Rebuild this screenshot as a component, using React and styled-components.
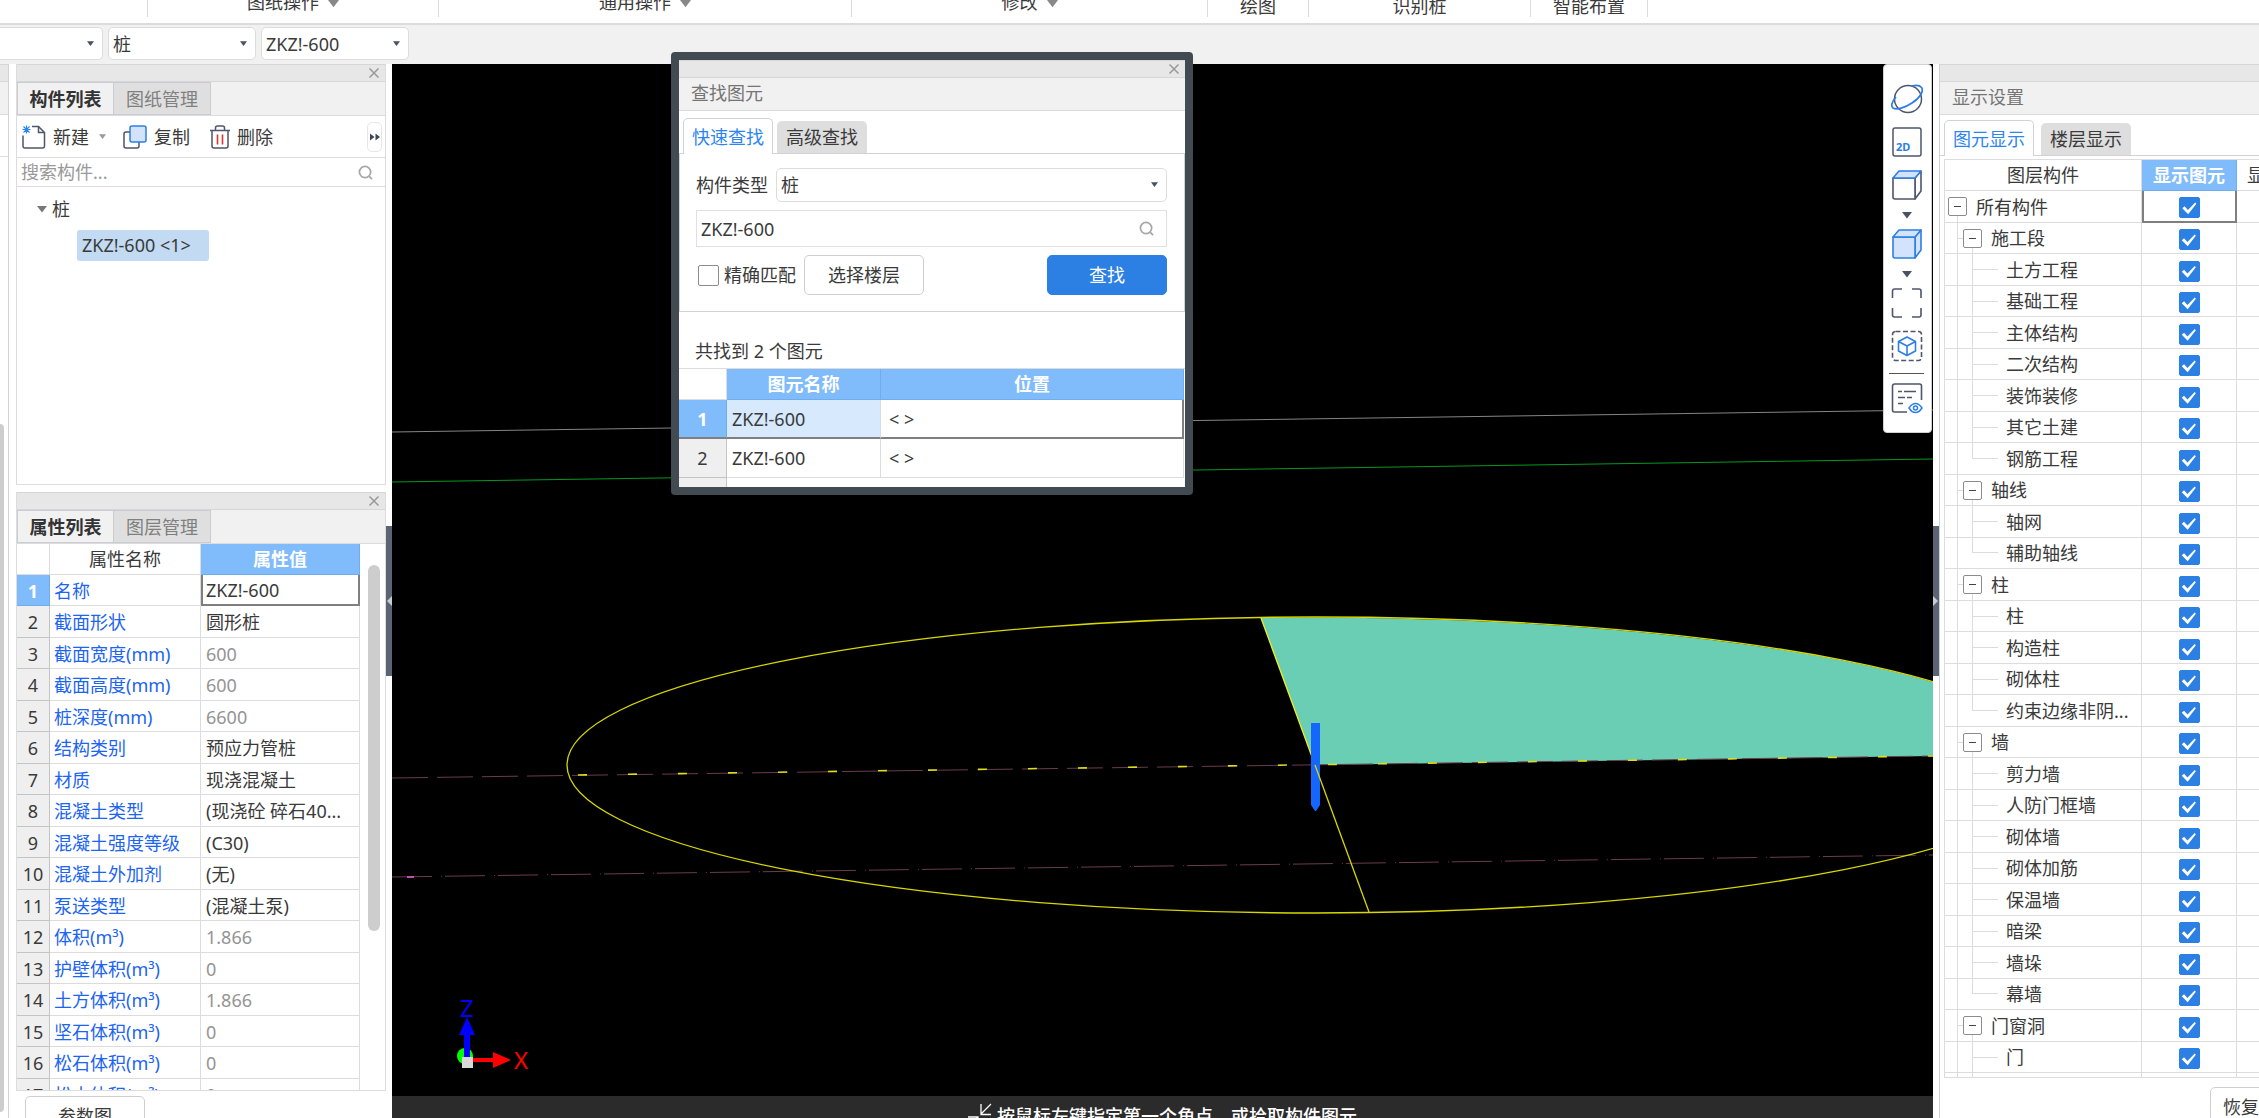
import React, { useState } from 'react';
import styled, { createGlobalStyle, css } from 'styled-components';

const ribbonGroups = [
  { label: '', width: 148 },
  { label: '图纸操作', width: 291, menu: true },
  { label: '通用操作', width: 413, menu: true },
  { label: '修改', width: 356, menu: true },
  { label: '绘图', width: 101 },
  { label: '识别桩', width: 222 },
  { label: '智能布置', width: 117 },
];

const properties = [
  { name: '名称', value: 'ZKZ!-600' },
  { name: '截面形状', value: '圆形桩' },
  { name: '截面宽度(mm)', value: '600', readOnly: true },
  { name: '截面高度(mm)', value: '600', readOnly: true },
  { name: '桩深度(mm)', value: '6600', readOnly: true },
  { name: '结构类别', value: '预应力管桩' },
  { name: '材质', value: '现浇混凝土' },
  { name: '混凝土类型', value: '(现浇砼 碎石40...' },
  { name: '混凝土强度等级', value: '(C30)' },
  { name: '混凝土外加剂', value: '(无)' },
  { name: '泵送类型', value: '(混凝土泵)' },
  { name: '体积(m³)', value: '1.866', readOnly: true },
  { name: '护壁体积(m³)', value: '0', readOnly: true },
  { name: '土方体积(m³)', value: '1.866', readOnly: true },
  { name: '坚石体积(m³)', value: '0', readOnly: true },
  { name: '松石体积(m³)', value: '0', readOnly: true },
  { name: '松土体积(m³)', value: '0', readOnly: true },
];

const layers = [
  { name: '施工段', items: ['土方工程', '基础工程', '主体结构', '二次结构', '装饰装修', '其它土建', '钢筋工程'] },
  { name: '轴线', items: ['轴网', '辅助轴线'] },
  { name: '柱', items: ['柱', '构造柱', '砌体柱', '约束边缘非阴...'] },
  { name: '墙', items: ['剪力墙', '人防门框墙', '砌体墙', '砌体加筋', '保温墙', '暗梁', '墙垛', '幕墙'] },
  { name: '门窗洞', items: ['门'], open: true },
];

const layerRows = [{ name: '所有构件', level: 0 }];
layers.forEach((group) => {
  layerRows.push({ name: group.name, level: 1 });
  group.items.forEach((item, i) => {
    layerRows.push({ name: item, level: 2, last: !group.open && i === group.items.length - 1 });
  });
});

const Triangle = ({ size = 7, color = '#4a5160' }) => (
  <svg width={size} height={size} viewBox="0 0 8 8" aria-hidden="true">
    <path d="M0 1.5h8L4 6.8z" fill={color} />
  </svg>
);

const CloseIcon = () => (
  <svg width="10" height="10" viewBox="0 0 10 10" aria-hidden="true">
    <path d="M.5.5l9 9M9.500.5l-9 9" stroke="#999" strokeWidth="1.5" fill="none" />
  </svg>
);

const SearchIcon = () => (
  <svg width="15" height="15" viewBox="0 0 16 16" aria-hidden="true">
    <circle cx="7.500" cy="7.500" r="6" stroke="#a6a6a6" strokeWidth="1.800" fill="none" />
    <path d="M11.500 11.500l3.500 3.500" stroke="#a6a6a6" strokeWidth="1.800" />
  </svg>
);

const NewIcon = () => (
  <svg width="24" height="24" viewBox="0 0 24 24" fill="none" aria-hidden="true">
    <path d="M10 1.500h6.500l6 6V21a2 2 0 0 1-2 2H3a2 2 0 0 1-2-2V10.500" stroke="#4f566b" strokeWidth="1.500" />
    <path d="M16.500 1.500v6h6" stroke="#4f566b" strokeWidth="1.500" />
    <path d="M4.500.5v8M.5 4.500h8M1.500 1.500l6 6M7.500 1.500l-6 6" stroke="#2d86f0" strokeWidth="1.200" />
  </svg>
);

const CopyIcon = () => (
  <svg width="24" height="24" viewBox="0 0 24 24" fill="none" aria-hidden="true">
    <rect x="1" y="7" width="15" height="16" rx="2" stroke="#4f566b" strokeWidth="1.500" />
    <rect x="7" y="1" width="16" height="16" rx="2" fill="#d2e3fb" stroke="#2d7fe5" strokeWidth="1.500" />
  </svg>
);

const DeleteIcon = () => (
  <svg width="20" height="24" viewBox="0 0 20 24" fill="none" aria-hidden="true">
    <path d="M0 5.500h20M5.500 5V3a2 2 0 0 1 2-2h5a2 2 0 0 1 2 2v2M2 5.500V21a2 2 0 0 0 2 2h12a2 2 0 0 0 2-2V5.500" stroke="#4f566b" strokeWidth="1.500" />
    <path d="M7.500 9.500v10M12.500 9.500v10" stroke="#e03131" strokeWidth="1.600" />
  </svg>
);

const OrbitIcon = () => (
  <svg width="32" height="32" viewBox="0 0 32 32" fill="none" aria-hidden="true">
    <circle cx="17" cy="16" r="13.500" stroke="#4f566b" strokeWidth="1.500" />
    <path d="M5 14C1 18.500-.5 23 2 25c3.500 2.300 12-.3 19-5 8.500-5.500 12-12 9.500-15.500C29 2.500 25.500 2 21 3" stroke="#2d7fe5" strokeWidth="1.700" />
  </svg>
);

const PlanIcon = () => (
  <svg width="30" height="30" viewBox="0 0 30 30" fill="none" aria-hidden="true">
    <rect x="1" y="1" width="28" height="28" rx="2" stroke="#4f566b" strokeWidth="1.500" />
    <text x="4" y="24" fontFamily="Noto Sans, sans-serif" fontWeight="700" fontSize="11" fill="#2d7fe5">2D</text>
  </svg>
);

const CubeIcon = ({ filled }) => (
  <svg width="32" height="32" viewBox="0 0 32 32" fill="none" strokeWidth="1.600" strokeLinejoin="round" aria-hidden="true">
    <path d="M24 9l6-7v20l-6 8z" fill={filled ? '#d2e3fb' : '#fff'} stroke={filled ? '#2d7fe5' : '#4f566b'} />
    <path d="M2 9h22v21H4a2 2 0 0 1-2-2z" fill={filled ? '#d2e3fb' : '#fff'} stroke={filled ? '#2d7fe5' : '#4f566b'} />
    <path d="M8 2h22l-6 7H2z" fill="#d2e3fb" stroke="#2d7fe5" />
  </svg>
);

const FitIcon = () => (
  <svg width="32" height="32" viewBox="0 0 32 32" fill="none" stroke="#4f566b" strokeWidth="1.600" aria-hidden="true">
    <path d="M1.500 11V4a2 2 0 0 1 2-2H11M21 2h7a2 2 0 0 1 2 2v7M30 21v7a2 2 0 0 1-2 2h-7M11 30H3.500a2 2 0 0 1-2-2v-7" />
  </svg>
);

const SelectCubeIcon = () => (
  <svg width="32" height="32" viewBox="0 0 32 32" fill="none" aria-hidden="true">
    <rect x="1.500" y="1.500" width="29" height="29" rx="3" stroke="#4f566b" strokeWidth="1.600" strokeDasharray="5 2.500" />
    <path d="M16 7l8.500 4.500v9.500L16 25.500 7.500 21v-9.500zM7.500 11.500L16 16l8.500-4.500M16 16v9.500" stroke="#2d7fe5" strokeWidth="1.600" strokeLinejoin="round" />
  </svg>
);

const ListEyeIcon = () => (
  <svg width="32" height="32" viewBox="0 0 32 32" fill="none" aria-hidden="true">
    <path d="M16 30H3.500a2 2 0 0 1-2-2V4a2 2 0 0 1 2-2h25a2 2 0 0 1 2 2v14" stroke="#4f566b" strokeWidth="1.600" />
    <path d="M7 9.500h4M13 9.500h12M7 15.500h7M16 15.500h5M7 21.500h5" stroke="#4f566b" strokeWidth="1.600" />
    <path d="M18 26c2-3 4-4.500 6.500-4.500S29 23 31 26c-2 3-4 4.500-6.500 4.500S20 29 18 26z" stroke="#2d7fe5" strokeWidth="1.500" />
    <circle cx="24.500" cy="26" r="2" stroke="#2d7fe5" strokeWidth="1.500" />
  </svg>
);

const PickIcon = () => (
  <svg width="24" height="30" viewBox="0 0 24 30" fill="none" stroke="#fff" strokeWidth="1.300" aria-hidden="true">
    <path d="M23 2L13 12M13 2v10.500h10" />
    <path d="M0 15h10v10M10 15L0 25" />
  </svg>
);

const Scene = () => (
  <SceneSvg viewBox="0 0 1541 1032" preserveAspectRatio="xMinYMin slice" role="img" aria-label="三维视图">
    <path d="M0 368L1541 346" stroke="#858585" strokeWidth="1" />
    <path d="M0 418L1541 395" stroke="#009a20" strokeWidth="1" />
    <path d="M923 701L869 554A748 148 0 0 1 1541 618V692z" fill="#69ceb4" />
    <path d="M0 714L1541 692" stroke="#6a3d48" strokeWidth="1" strokeDasharray="36 9" />
    <path d="M0 813L1541 791" stroke="#6a3d48" strokeWidth="1" strokeDasharray="40 9 1 3" />
    <path d="M15 813h7" stroke="#c050b0" strokeWidth="2" />
    <ellipse cx="923" cy="701" rx="748" ry="148" fill="none" stroke="#d8d800" strokeWidth="1.300" />
    <path d="M186 711L1541 692" stroke="#dede1a" strokeWidth="1.600" strokeDasharray="9 41" />
    <path d="M869 554L923 701" stroke="#f0f01a" strokeWidth="1.300" />
    <path d="M919 659h9v82l-4 6h-1l-4-6z" fill="#1565ff" />
    <path d="M923 701L977 848" stroke="#d8d800" strokeWidth="1.300" />
    <circle cx="73" cy="992" r="8" fill="#0f0" />
    <path d="M72 993v-22h-5l8-18 8 18h-5v22z" fill="#00f" />
    <path d="M80 994h21v-6l18 8-18 8v-6H80z" fill="#f00" />
    <rect x="70" y="993" width="11" height="11" fill="#d8d8d8" />
    <text x="68" y="953" fill="#00f" fontFamily="Noto Sans" fontSize="24">Z</text>
    <text x="122" y="1005" fill="#f00" fontFamily="Noto Sans" fontSize="24">X</text>
  </SceneSvg>
);

const FindDialog = () => {
  const [keyword, setKeyword] = useState('ZKZ!-600');
  const [exact, setExact] = useState(false);

  return (
    <Dialog role="dialog" aria-label="查找图元">
      <TitleBar><IconButton type="button" aria-label="关闭"><CloseIcon /></IconButton></TitleBar>
      <PanelHeading>查找图元</PanelHeading>
      <RoundTabs>
        <RoundTab type="button" $active>快速查找</RoundTab>
        <RoundTab type="button">高级查找</RoundTab>
      </RoundTabs>
      <FindForm>
        <FormRow>
          <label htmlFor="kind">构件类型</label>
          <SelectBox $grow>
            <Select id="kind"><option>桩</option></Select>
            <Triangle />
          </SelectBox>
        </FormRow>
        <KeywordBox>
          <TextInput aria-label="关键字" value={keyword} onChange={(e) => setKeyword(e.target.value)} />
          <SearchIcon />
        </KeywordBox>
        <FormRow>
          <CheckLabel>
            <Checkbox checked={exact} onChange={() => setExact(!exact)} />
            精确匹配
          </CheckLabel>
          <Button type="button">选择楼层</Button>
          <Spacer />
          <Button type="button" $primary>查找</Button>
        </FormRow>
      </FindForm>
      <ResultCount>共找到 2 个图元</ResultCount>
      <ResultTable>
        <colgroup><col width="48" /><col width="154" /><col /></colgroup>
        <thead>
          <tr><Th /><Th $selected>图元名称</Th><Th $selected>位置</Th></tr>
        </thead>
        <tbody>
          <ResultRow $selected><IndexCell $selected>1</IndexCell><Td>ZKZ!-600</Td><Td>&lt;&nbsp;&gt;</Td></ResultRow>
          <ResultRow><IndexCell>2</IndexCell><Td>ZKZ!-600</Td><Td>&lt;&nbsp;&gt;</Td></ResultRow>
          <ResultRow><IndexCell /><Td $blank /><Td $blank /></ResultRow>
        </tbody>
      </ResultTable>
    </Dialog>
  );
};

const ComponentPanel = () => (
  <ListPanel>
    <TitleBar><IconButton type="button" aria-label="关闭"><CloseIcon /></IconButton></TitleBar>
    <SquareTabs>
      <SquareTab type="button" $active>构件列表</SquareTab>
      <SquareTab type="button">图纸管理</SquareTab>
    </SquareTabs>
    <Actions>
      <ActionButton type="button"><NewIcon />新建</ActionButton>
      <MenuButton type="button" aria-label="新建菜单"><Triangle color="#999" /></MenuButton>
      <ActionButton type="button"><CopyIcon />复制</ActionButton>
      <ActionButton type="button"><DeleteIcon />删除</ActionButton>
      <Spacer />
      <MoreButton type="button" aria-label="更多">
        <svg width="10" height="8" viewBox="0 0 10 8" aria-hidden="true"><path d="M0 .5L4.500 4 0 7.500zM5.500.5L10 4 5.500 7.500z" fill="#3e4556" /></svg>
      </MoreButton>
    </Actions>
    <SearchRow>
      <TextInput aria-label="搜索构件" placeholder="搜索构件..." />
      <SearchIcon />
    </SearchRow>
    <Tree>
      <TreeParent><Triangle size={10} color="#777" />桩</TreeParent>
      <TreeItem>ZKZ!-600 &lt;1&gt;</TreeItem>
    </Tree>
  </ListPanel>
);

const PropertyPanel = () => (
  <PropPanel>
    <TitleBar><IconButton type="button" aria-label="关闭"><CloseIcon /></IconButton></TitleBar>
    <SquareTabs>
      <SquareTab type="button" $active>属性列表</SquareTab>
      <SquareTab type="button">图层管理</SquareTab>
    </SquareTabs>
    <PropBody>
      <PropTable>
        <colgroup><col width="33" /><col width="151" /><col width="159" /></colgroup>
        <thead>
          <tr><Th /><Th>属性名称</Th><Th $selected>属性值</Th></tr>
        </thead>
        <tbody>
          {properties.map((item, i) => (
            <PropRow key={item.name}>
              <IndexCell $selected={i === 0}>{i + 1}</IndexCell>
              <Td $link>{item.name}</Td>
              <Td $muted={item.readOnly} $focused={i === 0}>{item.value}</Td>
            </PropRow>
          ))}
        </tbody>
      </PropTable>
      <ScrollThumb />
    </PropBody>
  </PropPanel>
);

const LayerPanel = () => {
  const [hidden, setHidden] = useState({});

  return (
    <DisplayPanel>
      <TitleBar />
      <PanelHeading>显示设置</PanelHeading>
      <RoundTabs $compact>
        <RoundTab type="button" $active>图元显示</RoundTab>
        <RoundTab type="button">楼层显示</RoundTab>
      </RoundTabs>
      <LayerBody>
        <LayerTable>
          <colgroup><col width="197" /><col width="95" /><col width="95" /></colgroup>
          <thead>
            <tr><Th>图层构件</Th><Th $selected>显示图元</Th><Th $left>显</Th></tr>
          </thead>
          <tbody>
            {layerRows.map((row, i) => (
              <LayerRow key={i}>
                <LayerCell $level={row.level} $last={row.last}>
                  <LayerName $level={row.level}>
                    {row.level < 2 ? <Expander type="button" aria-label="折叠" /> : null}
                    {row.name}
                  </LayerName>
                </LayerCell>
                <CheckCell $focused={i === 0}>
                  <Checkbox
                    aria-label={row.name}
                    checked={!hidden[i]}
                    onChange={() => setHidden({ ...hidden, [i]: !hidden[i] })}
                  />
                </CheckCell>
                <Td />
              </LayerRow>
            ))}
            <LayerRow><LayerCell $level={2} /><Td /><Td /></LayerRow>
          </tbody>
        </LayerTable>
      </LayerBody>
      <LayerFooter><Button type="button">恢复</Button></LayerFooter>
    </DisplayPanel>
  );
};

const App = () => (
  <Shell>
    <GlobalStyle />
    <Ribbon>
      {ribbonGroups.map((group, i) => (
        <RibbonGroup key={i} $width={group.width} $menu={group.menu}>
          {group.label}
          {group.menu ? <Triangle size={11} color="#888" /> : null}
        </RibbonGroup>
      ))}
    </Ribbon>
    <SelectBar>
      <SelectBox $width={103} $cut>
        <Select aria-label="楼层"><option></option></Select>
        <Triangle />
      </SelectBox>
      <SelectBox $width={148}>
        <Select aria-label="构件类型"><option>桩</option></Select>
        <Triangle />
      </SelectBox>
      <SelectBox $width={148}>
        <Select aria-label="构件"><option>ZKZ!-600</option></Select>
        <Triangle />
      </SelectBox>
    </SelectBar>
    <Main>
      <NavEdge>
        <TitleBar />
        <NavTabs />
        <NavTools />
        <NavScroll />
      </NavEdge>
      <LeftColumn>
        <ComponentPanel />
        <PropertyPanel />
        <LeftFooter><Button type="button">参数图</Button></LeftFooter>
      </LeftColumn>
      <Gutter><Handle type="button" aria-label="收起左侧"><HandleArrow viewBox="0 0 6 10"><path d="M6 0L1 5l5 5z" /></HandleArrow></Handle></Gutter>
      <Center>
        <Viewport><Scene /></Viewport>
        <FindDialog />
        <ViewTools>
          <ViewButton type="button" aria-label="动态观察"><OrbitIcon /></ViewButton>
          <ViewButton type="button" aria-label="二维"><PlanIcon /></ViewButton>
          <ViewButton type="button" aria-label="俯视"><CubeIcon /></ViewButton>
          <ViewMenu type="button" aria-label="视图菜单"><Triangle size={10} /></ViewMenu>
          <ViewButton type="button" aria-label="实体"><CubeIcon filled /></ViewButton>
          <ViewMenu type="button" aria-label="实体菜单"><Triangle size={10} /></ViewMenu>
          <ViewButton type="button" aria-label="全屏"><FitIcon /></ViewButton>
          <ViewButton type="button" aria-label="选中显示"><SelectCubeIcon /></ViewButton>
          <ViewDivider />
          <ViewButton type="button" aria-label="显示设置"><ListEyeIcon /></ViewButton>
        </ViewTools>
        <StatusBar><PickIcon />按鼠标左键指定第一个角点，或拾取构件图元</StatusBar>
      </Center>
      <Gutter><Handle type="button" aria-label="收起右侧"><HandleArrow viewBox="0 0 6 10"><path d="M0 0l5 5-5 5z" /></HandleArrow></Handle></Gutter>
      <LayerPanel />
    </Main>
  </Shell>
);

export default App;

const GlobalStyle = createGlobalStyle`
  * {
    box-sizing: border-box;
  }
  body {
    margin: 0;
    overflow: hidden;
    background: #fff;
  }
  body, button, input, select {
    color: #3a3a3a;
    font-family: "Noto Sans", "Noto Sans CJK SC", sans-serif;
    font-size: 18px;
    line-height: 26px;
  }
  button {
    padding: 0;
    border: 0;
    background: none;
  }
`;

const Shell = styled.div`
  display: flex;
  flex-direction: column;
  height: 100vh;
  overflow: hidden;
`;

const Ribbon = styled.div`
  display: flex;
  flex: 0 0 25px;
  border-bottom: 2px solid #dcdcdc;
`;

const RibbonGroup = styled.div`
  display: flex;
  align-items: flex-end;
  justify-content: center;
  gap: 9px;
  width: ${(props) => props.$width}px;
  height: 17px;
  padding-bottom: ${(props) => (props.$menu ? '5px' : '1px')};
  border-right: 1px solid #dcdcdc;
  line-height: 20px;

  svg {
    margin-bottom: 3px;
  }
`;

const SelectBar = styled.div`
  display: flex;
  flex: 0 0 39px;
  align-items: flex-start;
  gap: 5px;
  padding-top: 2px;
  background: #f1f1f1;
`;

const SelectBox = styled.div`
  position: relative;
  width: ${(props) => (props.$width ? `${props.$width}px` : 'auto')};
  height: 33px;
  border: 1px solid #dcdcdc;
  border-radius: 5px;
  background: #fff;
  ${(props) => props.$grow && css`flex: 1; height: 34px;`}
  ${(props) => props.$cut && css`
    border-left: 0;
    border-top-left-radius: 0;
    border-bottom-left-radius: 0;
  `}

  svg {
    position: absolute;
    top: 12px;
    right: 8px;
    pointer-events: none;
  }
`;

const Select = styled.select`
  display: block;
  width: 100%;
  height: 100%;
  padding: 0 20px 0 4px;
  border: 0;
  outline: 0;
  background: transparent;
  appearance: none;
`;

const Main = styled.div`
  display: flex;
  flex: 1;
  min-height: 0;
`;

const NavEdge = styled.div`
  display: flex;
  flex-direction: column;
  flex: 0 0 9px;
  margin-right: 7px;
  border-right: 1px solid #d4d4d4;
`;

const NavTabs = styled.div`
  height: 33px;
  border-bottom: 1px solid #dcdcdc;
  background: #f1f1f1;
`;

const NavTools = styled.div`
  height: 42px;
  border-bottom: 1px solid #dcdcdc;
`;

const NavScroll = styled.div`
  flex: 1;
  width: 4px;
  margin: 267px 0 6px;
  border-radius: 0 4px 4px 0;
  background: #cdcdcd;
`;

const LeftColumn = styled.div`
  display: flex;
  flex-direction: column;
  flex: 0 0 370px;
  min-height: 0;
`;

const ListPanel = styled.section`
  flex: 0 0 421px;
  margin-bottom: 7px;
  border: 1px solid #dcdcdc;
  border-top: 0;
`;

const PropPanel = styled.section`
  display: flex;
  flex-direction: column;
  flex: 1;
  min-height: 0;
  border: 1px solid #dcdcdc;
  border-top: 0;
`;

const LeftFooter = styled.div`
  flex: 0 0 27px;
  padding: 5px 9px;
  overflow: hidden;
`;

const TitleBar = styled.div`
  display: flex;
  align-items: center;
  justify-content: flex-end;
  flex: 0 0 18px;
  height: 18px;
  padding-right: 6px;
  border-top: 1px solid #d6d6d6;
  border-bottom: 1px solid #d6d6d6;
  background: #e7e7e7;
`;

const IconButton = styled.button`
  display: flex;
`;

const PanelHeading = styled.div`
  height: 33px;
  padding-left: 12px;
  border-bottom: 1px solid #dcdcdc;
  background: #f1f1f1;
  color: #757575;
  line-height: 31px;
`;

const SquareTabs = styled.div`
  display: flex;
  flex: 0 0 34px;
  height: 34px;
  border-bottom: 1px solid #dcdcdc;
  background: #f1f1f1;
`;

const SquareTab = styled.button`
  width: 97px;
  border: 1px solid #c9cdd2;
  border-left-width: ${(props) => (props.$active ? '1px' : '0')};
  background: ${(props) => (props.$active ? '#f1f1f1' : '#dfdfdf')};
  color: ${(props) => (props.$active ? '#333' : '#808080')};
  font-weight: ${(props) => (props.$active ? 700 : 400)};
`;

const Actions = styled.div`
  display: flex;
  align-items: center;
  height: 42px;
  padding: 0 3px 0 5px;
  border-bottom: 1px solid #dcdcdc;
`;

const ActionButton = styled.button`
  display: flex;
  align-items: center;
  gap: 7px;
  margin-right: 20px;
`;

const MenuButton = styled.button`
  display: flex;
  width: 8px;
  margin: 0 16px 0 -10px;
`;

const MoreButton = styled.button`
  display: flex;
  align-items: center;
  justify-content: center;
  width: 15px;
  height: 30px;
  border: 1px solid #e6e6e6;
  border-radius: 5px;
`;

const Spacer = styled.div`
  flex: 1;
`;

const SearchRow = styled.div`
  display: flex;
  align-items: center;
  height: 29px;
  padding: 0 12px 0 4px;
  border-bottom: 1px solid #dcdcdc;
`;

const TextInput = styled.input`
  flex: 1;
  min-width: 0;
  padding: 0;
  border: 0;
  outline: 0;
  background: transparent;

  &::placeholder {
    color: #999;
  }
`;

const Tree = styled.div`
  display: flex;
  flex-direction: column;
  align-items: flex-start;
  gap: 8px;
  padding: 9px 20px;
`;

const TreeParent = styled.div`
  display: flex;
  align-items: center;
  gap: 5px;
`;

const TreeItem = styled.div`
  min-width: 132px;
  margin-left: 40px;
  padding: 2px 5px 3px;
  border-radius: 3px;
  background: #c2daf2;
`;

const PropBody = styled.div`
  display: flex;
  align-items: flex-start;
  flex: 1;
  min-height: 0;
  overflow: hidden;
`;

const ScrollThumb = styled.div`
  width: 12px;
  height: 366px;
  margin: 21px 0 0 8px;
  border-radius: 6px;
  background: #cdcdcd;
`;

const tableBase = css`
  border-collapse: separate;
  border-spacing: 0;
  table-layout: fixed;

  th, td {
    padding: 0;
    overflow: hidden;
    white-space: nowrap;
  }
`;

const PropTable = styled.table`
  ${tableBase}
  width: 343px;

  tbody td {
    padding-top: 1px;
  }
`;

const selectedHead = css`
  border-color: #6eaeee;
  background: #80bbfb;
  color: #fff;
  font-weight: 700;
`;

const Th = styled.th`
  height: 31px;
  border-right: 1px solid #dcdcdc;
  border-bottom: 1px solid #dcdcdc;
  font-weight: 400;
  line-height: 28px;
  text-align: center;
  ${(props) => props.$selected && selectedHead}
  ${(props) => props.$left && css`
    && {
      padding-left: 10px;
      text-align: left;
    }
  `}
`;

const IndexCell = styled.td`
  border-right: 1px solid #c4c4c4;
  border-bottom: 1px solid #c4c4c4;
  background: #efefef;
  line-height: 28px;
  text-align: center;
  ${(props) => props.$selected && selectedHead}
`;

const focusBorder = css`
  border: 2px solid #7f7f7f;
  border-top: 0;
`;

const Td = styled.td`
  border-right: 1px solid #dcdcdc;
  border-bottom: 1px solid #dcdcdc;
  color: ${(props) => (props.$link ? '#1c64f2' : props.$muted ? '#949494' : '#3a3a3a')};
  line-height: 28px;

  && {
    padding-left: ${(props) => (props.$focused ? '3px' : props.$link ? '4px' : '5px')};
  }
  ${(props) => props.$focused && focusBorder}
  ${(props) => props.$blank && css`border-right: 0;`}
`;

const CheckCell = styled.td`
  border-right: 1px solid #dcdcdc;
  border-bottom: 1px solid #dcdcdc;
  line-height: 24px;
  text-align: center;
  ${(props) => props.$focused && focusBorder}
`;

/* rows are 31 and 32 high in turn */
const PropRow = styled.tr`
  height: 31px;

  &:nth-child(even) {
    height: 32px;
  }
`;

const LayerRow = styled.tr`
  height: 32px;

  &:nth-child(even) {
    height: 31px;
  }
`;

const ResultRow = styled.tr`
  height: 39px;

  td {
    ${(props) => props.$selected && css`border-bottom: 2px solid #7f7f7f;`}
  }
  td:nth-child(2) {
    ${(props) => props.$selected && css`background: #d6e9fd;`}
  }
  td:last-child {
    ${(props) => props.$selected && css`border-right: 2px solid #7f7f7f;`}
  }
  td:nth-child(3) {
    text-indent: 3px;
  }
`;

const Gutter = styled.div`
  flex: 0 0 6px;
  padding-top: 462px;
  background: #fff;
`;

const Handle = styled.button`
  display: flex;
  align-items: center;
  width: 6px;
  height: 150px;
  background: #5a6472;
`;

const HandleArrow = styled.svg`
  width: 6px;
  height: 10px;
  fill: #c9cdd3;
`;

const Center = styled.div`
  position: relative;
  display: flex;
  flex-direction: column;
  flex: 1;
  min-width: 0;
`;

const Viewport = styled.div`
  flex: 1;
  min-height: 0;
  overflow: hidden;
  background: #000;
`;

const SceneSvg = styled.svg`
  display: block;
  width: 100%;
  height: 100%;
`;

const StatusBar = styled.div`
  display: flex;
  align-items: flex-start;
  justify-content: center;
  gap: 5px;
  flex: 0 0 22px;
  height: 22px;
  overflow: hidden;
  background: #2b2b2b;
  color: #fff;
  font-weight: 500;
  line-height: 40px;

  svg {
    flex: none;
    margin-top: 6px;
  }
`;

const ViewTools = styled.div`
  position: absolute;
  top: 0;
  right: 1px;
  display: flex;
  flex-direction: column;
  align-items: center;
  width: 49px;
  height: 369px;
  padding: 18px 2px 0 0;
  border: 1px solid #d0d0d0;
  border-radius: 4px;
  background: #fff;
`;

const ViewButton = styled.button`
  display: flex;
  align-items: center;
  justify-content: center;
  height: 32px;
  margin-bottom: 11px;
`;

const ViewMenu = styled.button`
  display: flex;
  align-items: center;
  height: 10px;
  margin: -2px 0 8px;
`;

const ViewDivider = styled.div`
  width: 35px;
  height: 1px;
  margin-bottom: 8px;
  background: #555;
`;

const Dialog = styled.div`
  position: absolute;
  top: -12px;
  left: 279px;
  z-index: 10;
  display: flex;
  flex-direction: column;
  width: 522px;
  height: 443px;
  border: 8px solid #424a52;
  border-radius: 4px;
  background: #fff;
`;

const RoundTabs = styled.div`
  display: flex;
  align-items: flex-end;
  gap: ${(props) => (props.$compact ? '7px' : '4px')};
  height: ${(props) => (props.$compact ? '41px' : '43px')};
  padding-left: 4px;
  border-bottom: 1px solid #cfd3d9;
`;

const RoundTab = styled.button`
  height: 32px;
  padding: 0 9px;
  border-radius: 5px 5px 0 0;
  background: #dedede;
  ${(props) => props.$active && css`
    height: 36px;
    margin-bottom: -1px;
    padding: 0 8px;
    border: 1px solid #cfd3d9;
    border-bottom: 0;
    background: #fff;
    color: #2d86f0;
  `}
`;

const FindForm = styled.form`
  display: flex;
  flex-direction: column;
  gap: 8px;
  height: 158px;
  padding: 14px 17px 0 16px;
  border: 1px solid #cfd3d9;
  border-top: 0;
`;

const FormRow = styled.div`
  display: flex;
  align-items: center;
  gap: 8px;
`;

const KeywordBox = styled.div`
  display: flex;
  align-items: center;
  height: 37px;
  padding: 0 12px 0 4px;
  border: 1px solid #e0e0e0;
`;

const CheckLabel = styled.label`
  display: flex;
  align-items: center;
  gap: 5px;
  padding-left: 2px;
`;

const Checkbox = styled.input.attrs({ type: 'checkbox' })`
  display: inline-block;
  width: 21px;
  height: 21px;
  margin: 0;
  border: 1px solid #8c8c8c;
  border-radius: 2px;
  background: #fff;
  vertical-align: middle;
  appearance: none;

  &:checked {
    border-color: #2d80e3;
    background: #2d80e3;
  }
  &:checked::after {
    content: '';
    display: block;
    height: 19px;
    background: #fff;
    clip-path: polygon(12% 52%, 24% 42%, 42% 62%, 80% 22%, 86% 28%, 43% 84%);
  }
`;

const Button = styled.button`
  width: 120px;
  height: 40px;
  border: 1px solid #cfcfcf;
  border-radius: 5px;
  background: #fff;
  ${(props) => props.$primary && css`
    border-color: #2d80e3;
    background: #2d80e3;
    color: #fff;
  `}
`;

const ResultCount = styled.div`
  height: 57px;
  padding: 26px 0 0 16px;
  border-bottom: 1px solid #dcdcdc;
`;

const ResultTable = styled.table`
  ${tableBase}
  display: block;
  flex: 1;
  min-height: 0;
  overflow: hidden;

  col:last-child {
    width: 303px;
  }
`;

const DisplayPanel = styled.aside`
  display: flex;
  flex-direction: column;
  flex: 0 0 320px;
  min-width: 0;
  overflow: hidden;
  border-left: 1px solid #cfd3d9;
`;

const LayerBody = styled.div`
  flex: 1;
  min-height: 0;
  margin: 3px 0 0 4px;
  overflow: hidden;
  border: 1px solid #dcdcdc;
  border-right: 0;
`;

const LayerTable = styled.table`
  ${tableBase}
  width: 387px;
`;

const LayerCell = styled.td`
  position: relative;
  border-right: 1px solid #dcdcdc;
  border-bottom: 1px solid #dcdcdc;

  /* tree guide lines */
  &::before {
    content: '';
    position: absolute;
    top: ${(props) => (props.$level === 0 ? '50%' : '0')};
    bottom: 0;
    left: 12px;
    width: ${(props) => (props.$level === 1 ? '6px' : '0')};
    border-left: 1px solid #dcdcdc;
    background: ${(props) => (props.$level === 1 ? 'linear-gradient(#dcdcdc, #dcdcdc) 0 50% / 100% 1px no-repeat' : 'none')};
  }
  &::after {
    content: '';
    position: absolute;
    top: ${(props) => (props.$level === 1 ? '50%' : '0')};
    bottom: ${(props) => (props.$last ? '50%' : '0')};
    left: 27px;
    display: ${(props) => (props.$level === 0 ? 'none' : 'block')};
    width: ${(props) => (props.$level === 2 ? '25px' : '0')};
    border-left: 1px solid #dcdcdc;
    background: ${(props) => (props.$level === 2 ? `linear-gradient(#dcdcdc, #dcdcdc) 0 ${props.$last ? '100%' : '50%'} / 100% 1px no-repeat` : 'none')};
  }
`;

const LayerName = styled.div`
  position: relative;
  z-index: 1;
  display: flex;
  align-items: center;
  gap: 9px;
  padding-left: ${(props) => [3, 18, 61][props.$level]}px;
  line-height: 28px;
`;

const Expander = styled.button`
  display: flex;
  align-items: center;
  justify-content: center;
  width: 19px;
  height: 19px;
  border: 1px solid #8c8c8c;
  border-radius: 2px;
  background: #fff;

  &::after {
    content: '';
    width: 7px;
    height: 1px;
    background: #444;
  }
`;

const LayerFooter = styled.div`
  flex: 0 0 40px;
  padding: 9px 0 0 270px;
  overflow: hidden;

  button {
    padding-left: 12px;
    text-align: left;
  }
`;
